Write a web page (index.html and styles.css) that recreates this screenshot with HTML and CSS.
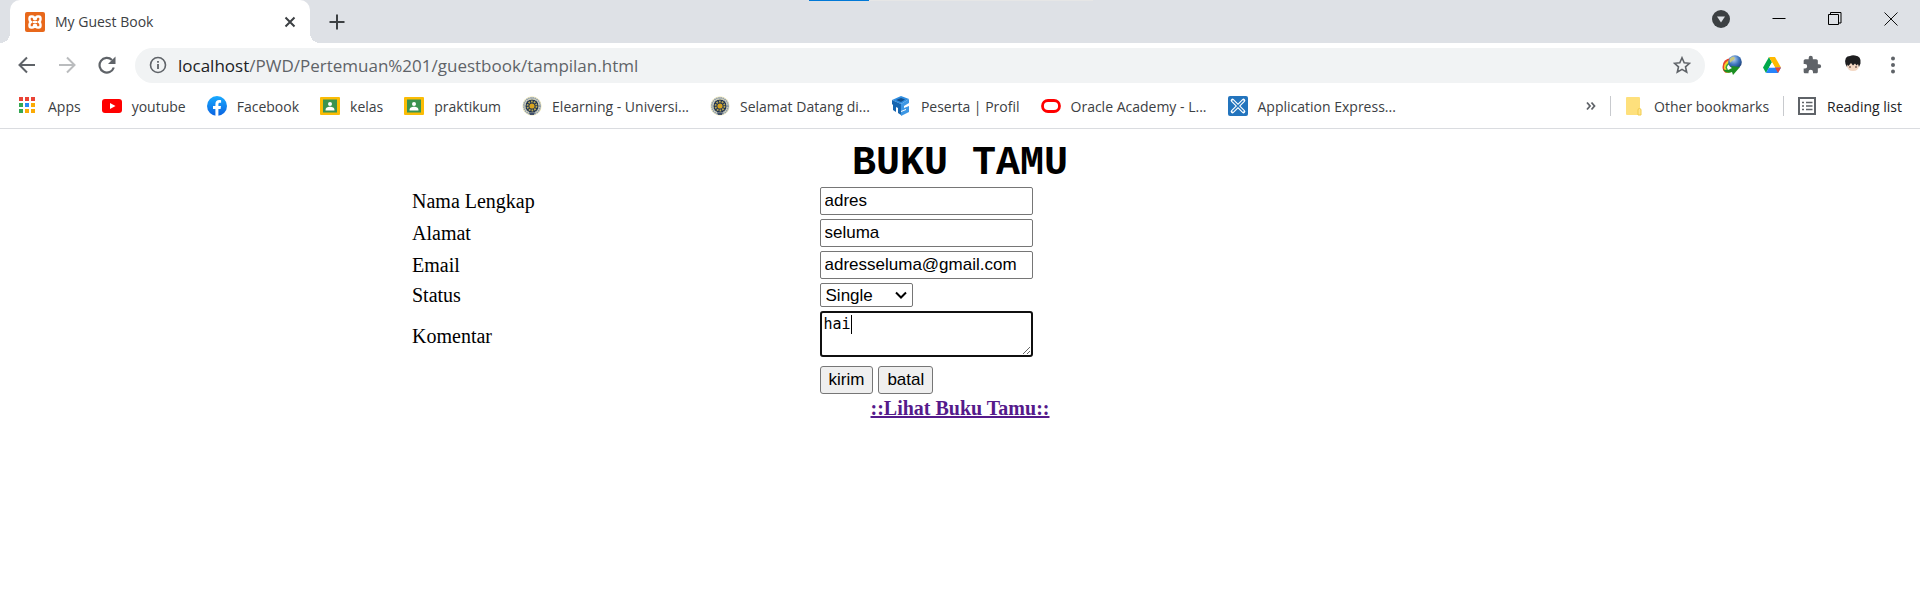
FILE: index.html
```html
<!DOCTYPE html>
<html lang="id">
<head>
<meta charset="utf-8">
<title>My Guest Book</title>
<link rel="stylesheet" href="styles.css">
</head>
<body>
<svg width="0" height="0" class="defs" aria-hidden="true">
  <defs>
    <linearGradient id="fb" x1="0" y1="0" x2="0" y2="1"><stop offset="0" stop-color="#19aaff"/><stop offset="1" stop-color="#0a62e0"/></linearGradient>
    <radialGradient id="globe" cx=".4" cy=".3" r=".8"><stop offset="0" stop-color="#b9d4f2"/><stop offset=".5" stop-color="#3d74bd"/><stop offset="1" stop-color="#12305f"/></radialGradient>
    <symbol id="classroom" viewBox="0 0 20 18"><rect width="20" height="18" rx="1" fill="#fbbc05"/><rect x="3" y="2.500" width="14" height="13" fill="#3b9350"/><circle cx="10" cy="7" r="2" fill="#fff"/><path d="M5.500 13.500c0-3 2-3.700 4.500-3.700s4.500.7 4.500 3.700z" fill="#fff"/></symbol>
    <symbol id="campus" viewBox="0 0 20 20"><circle cx="10" cy="10" r="9.700" fill="#f3ecc0"/><circle cx="10" cy="10" r="8" fill="none" stroke="#8d9caf" stroke-width="2" stroke-dasharray="1.500 .6"/><circle cx="10" cy="10" r="6.600" fill="#1d3152"/><circle cx="10" cy="10" r="4.500" fill="none" stroke="#b9a852" stroke-width="1.800" stroke-dasharray="1.800 1"/><circle cx="10" cy="10" r="2.600" fill="#d8a41e"/><path d="M7 16.500h6l-1 2.500H8z" fill="#41506b"/></symbol>
  </defs>
</svg>

<header class="browser">
  <div class="tabstrip">
    <div class="loader"></div>
    <div class="tab">
      <svg class="i20" viewBox="0 0 20 20"><rect width="20" height="20" rx="2" fill="#e8681b"/><path d="M6.200 4.500h1q1.800 0 1.800 1.700 0 1 1 1t1-1q0-1.700 1.800-1.700h1q1.700 0 1.700 1.700v1.300q0 1.500-1.500 2.500 1.500 1 1.500 2.500v1.300q0 1.700-1.700 1.700h-1q-1.800 0-1.800-1.700 0-1-1-1t-1 1q0 1.700-1.800 1.700h-1q-1.700 0-1.700-1.700v-1.300Q4.500 11 6 10 4.500 9 4.500 7.500V6.200q0-1.700 1.700-1.700z" fill="none" stroke="#fff" stroke-width="2.400"/><path d="M8 10h4" stroke="#fff" stroke-width="2"/></svg>
      <span class="tab-title">My Guest Book</span>
      <button class="icon-btn" aria-label="Close tab"><svg class="i12" viewBox="0 0 12 12"><path d="M1.500 1.500l9 9M10.500 1.500l-9 9" stroke="#3c4043" stroke-width="2"/></svg></button>
    </div>
    <button class="icon-btn new-tab" aria-label="New tab"><svg class="i16" viewBox="0 0 16 16"><path d="M8 .5v15M.5 8h15" stroke="#3c4043" stroke-width="2"/></svg></button>
    <div class="window-controls">
      <button class="icon-btn" aria-label="Search tabs"><svg class="i18" viewBox="0 0 18 18"><circle cx="9" cy="9" r="9" fill="#3c4043"/><path d="M5 6.500h8L9 12.500z" fill="#dee1e6"/></svg></button>
      <button class="icon-btn" aria-label="Minimize"><svg class="i14" viewBox="0 0 14 14"><path d="M.5 6.500h13" stroke="#000"/></svg></button>
      <button class="icon-btn" aria-label="Restore"><svg class="i14" viewBox="0 0 14 14"><path d="M.5 2.500h10v10H.5zM2.500 2.500v-2h10.500v10.500h-2.500" fill="none" stroke="#000"/></svg></button>
      <button class="icon-btn" aria-label="Close"><svg class="i14" viewBox="0 0 14 14"><path d="M.5.5l13 13M13.500.5l-13 13" stroke="#111"/></svg></button>
    </div>
  </div>

  <div class="toolbar">
    <nav class="nav">
      <button class="icon-btn" aria-label="Back"><svg class="i18" viewBox="0 0 18 18"><path d="M17 9H2M9 1.500L1.500 9 9 16.500" fill="none" stroke="#5f6368" stroke-width="2"/></svg></button>
      <button class="icon-btn" aria-label="Forward"><svg class="i18" viewBox="0 0 18 18"><path d="M1 9h15M9 1.500L16.500 9 9 16.500" fill="none" stroke="#babcbe" stroke-width="2"/></svg></button>
      <button class="icon-btn" aria-label="Reload"><svg class="i18" viewBox="0 0 18 18"><path d="M15.800 11.500A7.300 7.300 0 1 1 14 4" fill="none" stroke="#5f6368" stroke-width="2.200"/><path d="M17.500.5v7.500H10z" fill="#5f6368"/></svg></button>
    </nav>
    <div class="omnibox">
      <svg class="i18" viewBox="0 0 18 18"><circle cx="9" cy="9" r="7.500" fill="none" stroke="#5f6368" stroke-width="1.600"/><path d="M9 8v5M9 5v1.800" stroke="#5f6368" stroke-width="1.800"/></svg>
      <div class="url"><span class="host">localhost</span>/PWD/Pertemuan%201/guestbook/tampilan.html</div>
      <button class="icon-btn" aria-label="Bookmark this page"><svg class="i18" viewBox="0 0 18 18"><path d="M9 1.800l2.200 5 5.300.5-4 3.600 1.200 5.300L9 13.400l-4.700 2.800 1.200-5.300-4-3.600 5.300-.5z" fill="none" stroke="#5f6368" stroke-width="1.600"/></svg></button>
    </div>
    <div class="extensions">
      <button class="icon-btn" aria-label="Download manager"><svg class="i20" viewBox="0 0 20 20"><path d="M.5 12Q.5 4 9 3v14l-5 1Q.5 16 .5 12z" fill="#e8452c"/><path d="M2 12.500Q2 6 9 5v12l-4 1Q2 16 2 12.500z" fill="#f6d42b"/><path d="M3.500 12.500Q4 8 9 7v9l-3 1Q4 15 3.500 12.500z" fill="#38a83c"/><path d="M5 12.500Q5.500 9 9 9v6H6z" fill="#fff"/><circle cx="13" cy="7" r="6.800" fill="url(#globe)"/><path d="M8.500 3c3-2.500 5-1 4 1s-4 2-4 4c-1.500-2-1-4 0-5z" fill="#c9c77d"/><path d="M1 14c3 2 6 1 9-1l-1-2 9 1-7 8-1-3c-4 2-8 0-9-3z" fill="#1c8f22"/></svg></button>
      <button class="icon-btn" aria-label="Google Drive"><svg class="i18" viewBox="0 0 18 16"><path d="M6 0L0 10.500 3 16 9 5.300z" fill="#00a94b"/><path d="M6 0h6l6 10.500h-6z" fill="#ffba00"/><path d="M3 16l3-5.500h12L15 16z" fill="#2684fc"/><path d="M12 10.500h6L15 16z" fill="#ea4335"/><path d="M9 5.300l3 5.200H6z" fill="#fff"/></svg></button>
      <button class="icon-btn" aria-label="Extensions"><svg class="i20" viewBox="0 0 24 24"><path d="M20.500 11H19V7c0-1.100-.9-2-2-2h-4V3.500a2.500 2.500 0 0 0-5 0V5H4c-1.100 0-2 .9-2 2v3.800h1.500a2.700 2.700 0 0 1 0 5.400H2V20c0 1.100.9 2 2 2h3.800v-1.500a2.700 2.700 0 0 1 5.400 0V22H17c1.100 0 2-.9 2-2v-4h1.500a2.500 2.500 0 0 0 0-5z" fill="#5f6368"/></svg></button>
      <button class="icon-btn" aria-label="Profile"><svg class="i20" viewBox="0 0 20 20"><path d="M4 7h12v4q-.5 5-6 5t-6-5z" fill="#f4d8c4"/><path d="M2.500 9Q1 1 7 1q2-1 5-.5 6.500.5 5.500 8l-1.500 3.500-1-3-1.500 1.500-1.500-2-2 2L8 8l-2.500 3-1-1.500L4 12z" fill="#1e1e20"/><path d="M6 12h2M12 12h2" stroke="#4a302a"/></svg></button>
      <button class="icon-btn" aria-label="Menu"><svg class="i18" viewBox="0 0 18 18"><g fill="#5f6368"><circle cx="9" cy="2.500" r="2"/><circle cx="9" cy="9" r="2"/><circle cx="9" cy="15.500" r="2"/></g></svg></button>
    </div>
  </div>

  <nav class="bookmarks">
    <a href="#" class="bm"><svg class="i20" viewBox="0 0 20 20"><g fill="#ea4335"><path d="M1 1h4v4H1zM7 1h4v4H7zM13 1h4v4h-4z"/></g><path d="M1 7h4v4H1zM1 13h4v4H1z" fill="#34a853"/><path d="M7 7h4v4H7z" fill="#2a8af5"/><path d="M7 13h4v4H7zM13 7h4v4h-4zM13 13h4v4h-4z" fill="#fbab05"/></svg><span>Apps</span></a>
    <a href="#" class="bm"><svg class="i20" viewBox="0 0 20 20"><rect y="3" width="20" height="14" rx="3" fill="#f00"/><path d="M8 7l5.500 3L8 13z" fill="#fff"/></svg><span>youtube</span></a>
    <a href="#" class="bm"><svg class="i20" viewBox="0 0 20 20"><circle cx="10" cy="10" r="10" fill="url(#fb)"/><path d="M8.400 20v-7H6v-3h2.400V8c0-2.500 1.500-3.900 3.700-3.900 1 0 2 .2 2 .2v2.400h-1.200c-1.200 0-1.500.7-1.500 1.500V10h2.600l-.4 3h-2.200v7z" fill="#fff"/></svg><span>Facebook</span></a>
    <a href="#" class="bm"><svg class="i20"><use href="#classroom"/></svg><span>kelas</span></a>
    <a href="#" class="bm"><svg class="i20"><use href="#classroom"/></svg><span>praktikum</span></a>
    <a href="#" class="bm"><svg class="i20"><use href="#campus"/></svg><span>Elearning - Universi...</span></a>
    <a href="#" class="bm"><svg class="i20"><use href="#campus"/></svg><span>Selamat Datang di...</span></a>
    <a href="#" class="bm"><svg class="i20" viewBox="0 0 20 20"><path d="M1 4l9-4 8 3-8 5z" fill="#2f8de0"/><path d="M5 4l5-2 4 1.500-4 2.500z" fill="#12508e"/><path d="M1 4l9 4v11l-3-2v-5l-2-1v5l-3-2V9L1 8z" fill="#1766b0"/><path d="M10 8l8-5v4l-5 3v2l5-2v6l-8 4v-4l5-2v-1l-5 2z" fill="#3c97e4"/></svg><span>Peserta | Profil</span></a>
    <a href="#" class="bm"><svg class="i20" viewBox="0 0 20 20"><rect x="1.500" y="4.500" width="17" height="11" rx="5.500" fill="none" stroke="#f00" stroke-width="2.800"/></svg><span>Oracle Academy - L...</span></a>
    <a href="#" class="bm"><svg class="i20" viewBox="0 0 20 20"><rect width="20" height="20" rx="2" fill="#2374bd"/><path d="M4.500 4.500l11 11M15.500 4.500l-11 11" stroke="#fff" stroke-width="3.600" stroke-linecap="round"/><path d="M4.500 4.500l11 11M15.500 4.500l-11 11" stroke="#2374bd" stroke-width="1.400"/></svg><span>Application Express...</span></a>
    <div class="bm-end">
      <button class="icon-btn" aria-label="More bookmarks"><svg class="i10" viewBox="0 0 10 10"><path d="M1 1.500L4 5 1 8.500M5.500 1.500l3 3.500-3 3.500" fill="none" stroke="#5f6368" stroke-width="1.800"/></svg></button>
      <a href="#" class="bm ruled"><svg class="i20" viewBox="0 0 20 20"><rect x="2" y="1" width="14" height="18" rx="1" fill="#fee07c"/><path d="M14 19v-5q0-1.500 1.500-1.500T17 14v5z" fill="#ffe58f" stroke="#f2cc4d"/></svg><span>Other bookmarks</span></a>
      <a href="#" class="bm ruled dark"><svg class="i20" viewBox="0 0 20 20"><rect x="2" y="2" width="16" height="16" fill="none" stroke="#5f6368" stroke-width="2"/><path d="M5 6.500h2M5 10h2M5 13.500h2M9 6.500h6.500M9 10h6.500M9 13.500h6.500" stroke="#5f6368" stroke-width="1.600"/></svg><span>Reading list</span></a>
    </div>
  </nav>
</header>

<main class="page">
  <h1 class="title">BUKU TAMU</h1>
  <form class="guest">
    <table class="fields">
      <tr><td class="label"><label for="nama">Nama Lengkap</label></td><td><input class="text" id="nama" type="text" value="adres"></td></tr>
      <tr><td class="label"><label for="alamat">Alamat</label></td><td><input class="text" id="alamat" type="text" value="seluma"></td></tr>
      <tr><td class="label"><label for="email">Email</label></td><td><input class="text" id="email" type="text" value="adresseluma@gmail.com"></td></tr>
      <tr><td class="label"><label for="status">Status</label></td><td><span class="select-wrap"><select class="status" id="status"><option>Single</option><option>Menikah</option></select><svg class="i12 chevron" viewBox="0 0 12 12"><path d="M1 3.500l5 5 5-5" fill="none" stroke="#000" stroke-width="2"/></svg></span></td></tr>
      <tr><td class="label"><label for="komentar">Komentar</label></td><td><span class="area-wrap"><textarea class="comment" id="komentar">hai</textarea><span class="caret"></span></span></td></tr>
      <tr><td></td><td><div class="actions"><button class="push" type="button">kirim</button><button class="push" type="button">batal</button></div></td></tr>
    </table>
  </form>
  <a class="view" href="#daftar">::Lihat Buku Tamu::</a>
</main>
</body>
</html>
```
FILE: styles.css
```css
* { box-sizing: border-box; }
body { margin: 0; background: #fff; color: #000; font-family: "Liberation Serif", "Times New Roman", serif; font-size: 20px; }
.defs { position: absolute; }
svg { display: block; flex: none; }
.i10 { width: 10px; height: 10px; }
.i12 { width: 12px; height: 12px; }
.i14 { width: 14px; height: 14px; }
.i16 { width: 16px; height: 16px; }
.i18 { width: 18px; height: 18px; }
.i20 { width: 20px; height: 20px; }
.icon-btn { display: block; padding: 0; border: 0; background: none; }

.browser { font-family: "Open Sans", "Noto Sans", sans-serif; font-size: 14px; color: #3c4043; border-bottom: 1px solid #dadce0; }
.tabstrip { position: relative; display: flex; align-items: center; height: 43px; padding-left: 10px; background: #dee1e6; }
.loader { position: absolute; top: 0; left: 809px; width: 284px; height: 1px; background: linear-gradient(to right, #0078d7 60px, #e6e6e6 60px); }
.tab { position: relative; display: flex; align-items: center; gap: 10px; width: 300px; height: 43px; padding: 0 14px 0 15px; border-radius: 10px 10px 0 0; background: #fff; }
.tab::before, .tab::after { content: ""; position: absolute; bottom: 0; width: 10px; height: 10px; }
.tab::before { right: 100%; background: radial-gradient(circle at 0 0, #dee1e6 10px, #fff 10px); }
.tab::after { left: 100%; background: radial-gradient(circle at 100% 0, #dee1e6 10px, #fff 10px); }
.tab-title { flex: 1; }
.new-tab { margin-left: 19px; }
.window-controls { display: flex; gap: 42px; align-items: center; margin-left: auto; padding: 0 22px 6px 0; }

.toolbar { display: flex; align-items: center; height: 44px; padding: 0 18px; }
.nav { display: flex; gap: 22px; width: 117px; flex: none; }
.omnibox { display: flex; flex: 1; align-items: center; gap: 11px; height: 35px; padding: 0 14px; border-radius: 18px; background: #f1f3f4; }
.url { flex: 1; font-size: 17px; color: #5f6368; white-space: nowrap; }
.host { color: #202124; }
.extensions { display: flex; align-items: center; gap: 21px; padding-left: 17px; }

.bookmarks { display: flex; align-items: center; gap: 21px; height: 41px; padding: 0 18px 3px; }
.bm { display: flex; align-items: center; gap: 10px; color: #3c4043; text-decoration: none; white-space: nowrap; }
.bm-end { display: flex; align-items: center; gap: 14px; margin-left: auto; }
.ruled { height: 20px; padding-left: 13px; border-left: 1px solid #c8cace; }
.dark { color: #202124; }

.page { padding: 15px 10px; text-align: center; }
.title { margin: 0; font-family: "Courier New", "Liberation Mono", monospace; font-size: 40px; line-height: 40px; }
.guest { width: 58%; margin: 0 auto; }
.fields { width: 100%; border-spacing: 2px; border-collapse: separate; table-layout: fixed; text-align: left; }
.fields td { padding: 1px; }
.fields .label { width: 37%; }
.text, .status, .push { font-family: "Liberation Sans", Arial, sans-serif; font-size: 17px; color: #000; }
.text { display: block; width: 213px; height: 28px; padding: 0 4px; border: 1px solid #767676; border-radius: 2px; }
.select-wrap { position: relative; display: block; width: 93px; }
.status { display: block; width: 100%; height: 24px; padding: 0 5px; border: 1px solid #767676; border-radius: 2px; background: #fff; appearance: none; }
.chevron { position: absolute; top: 6px; right: 6px; pointer-events: none; }
.area-wrap { position: relative; display: block; width: 213px; margin-bottom: 5px; }
.comment { display: block; width: 100%; height: 46px; padding: 2px; border: 2px solid #101010; border-radius: 3px; font-family: "DejaVu Sans Mono", monospace; font-size: 15px; outline: 0; }
.caret { position: absolute; top: 4px; left: 31px; width: 1px; height: 19px; background: #000; }
.actions { display: flex; gap: 5px; }
.push { height: 28px; padding: 0 8px; border: 1px solid #767676; border-radius: 3px; background: #efefef; }
.view { font-weight: bold; color: #551a8b; }
```
